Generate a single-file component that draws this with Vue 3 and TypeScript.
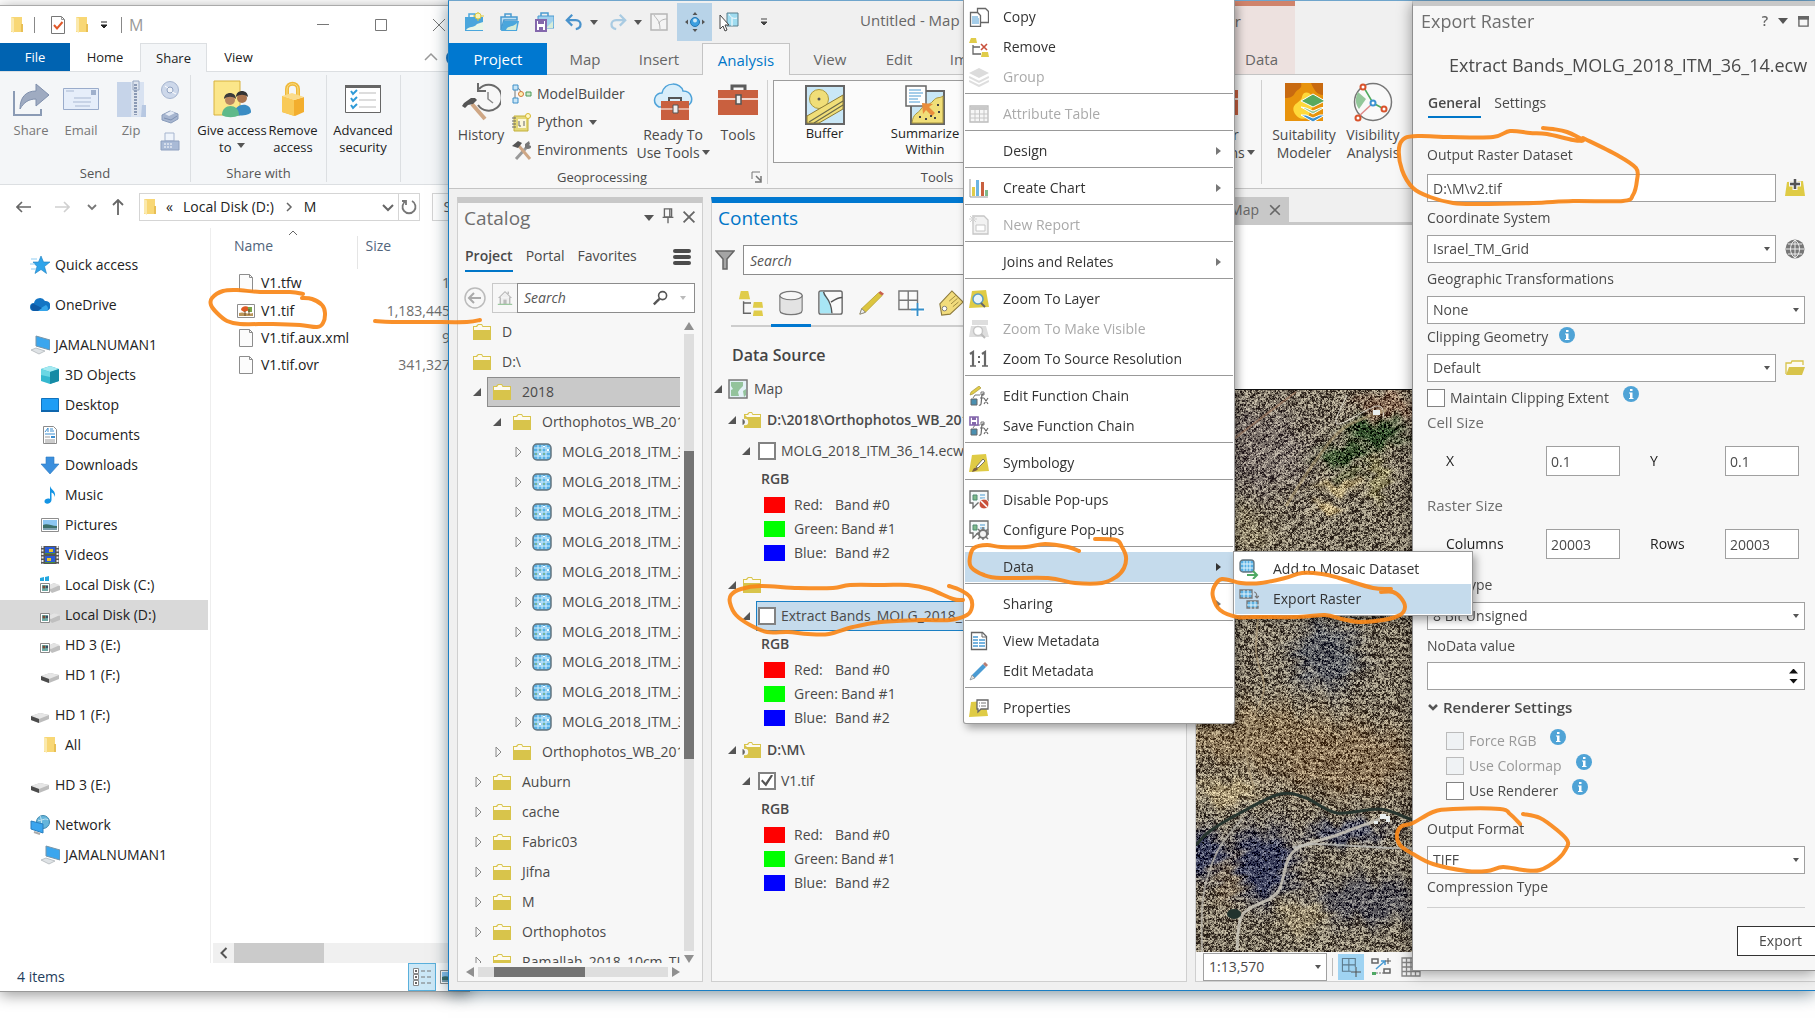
<script setup lang="ts">
import { onMounted, ref } from 'vue'

interface NavItem { icon: string; label: string; level: number; gap?: boolean; selected?: boolean }
interface FileItem { icon: string; name: string; size: string }
interface TreeItem { icon: string; label: string; level: number; state: 'none' | 'open' | 'closed'; selected?: boolean }
interface LayerGroup { folder: string; layer: string; checked: boolean; selected?: boolean; bare?: boolean }
interface MenuEntry { label: string; icon?: string; disabled?: boolean; arrow?: boolean; active?: boolean; sep?: boolean }

const nav: NavItem[] = [
  { icon: 'star', label: 'Quick access', level: 0 },
  { icon: 'cloud', label: 'OneDrive', level: 0, gap: true },
  { icon: 'pc', label: 'JAMALNUMAN1', level: 0, gap: true },
  { icon: 'cube', label: '3D Objects', level: 1 },
  { icon: 'desktop', label: 'Desktop', level: 1 },
  { icon: 'document', label: 'Documents', level: 1 },
  { icon: 'download', label: 'Downloads', level: 1 },
  { icon: 'music', label: 'Music', level: 1 },
  { icon: 'picture', label: 'Pictures', level: 1 },
  { icon: 'video', label: 'Videos', level: 1 },
  { icon: 'diskc', label: 'Local Disk (C:)', level: 1 },
  { icon: 'diskd', label: 'Local Disk (D:)', level: 1, selected: true },
  { icon: 'diskd', label: 'HD 3 (E:)', level: 1 },
  { icon: 'drive', label: 'HD 1 (F:)', level: 1 },
  { icon: 'drive', label: 'HD 1 (F:)', level: 0, gap: true },
  { icon: 'wfolder', label: 'All', level: 1 },
  { icon: 'drive', label: 'HD 3 (E:)', level: 0, gap: true },
  { icon: 'network', label: 'Network', level: 0, gap: true },
  { icon: 'pc', label: 'JAMALNUMAN1', level: 1 },
]

const files: FileItem[] = [
  { icon: 'file', name: 'V1.tfw', size: '1' },
  { icon: 'tif', name: 'V1.tif', size: '1,183,445' },
  { icon: 'file', name: 'V1.tif.aux.xml', size: '9' },
  { icon: 'file', name: 'V1.tif.ovr', size: '341,327' },
]

const tree: TreeItem[] = [
  { icon: 'folder', label: 'D', level: 0, state: 'none' },
  { icon: 'folder', label: 'D:\\', level: 0, state: 'none' },
  { icon: 'folder', label: '2018', level: 1, state: 'open', selected: true },
  { icon: 'folder', label: 'Orthophotos_WB_2018', level: 2, state: 'open' },
  ...Array.from({ length: 10 }, (): TreeItem => ({ icon: 'raster', label: 'MOLG_2018_ITM_36', level: 3, state: 'closed' })),
  { icon: 'folder', label: 'Orthophotos_WB_2018', level: 2, state: 'closed' },
  ...['Auburn', 'cache', 'Fabric03', 'Jifna', 'M', 'Orthophotos', 'Ramallah_2018_10cm_TIF'].map(
    (label): TreeItem => ({ icon: 'folder', label, level: 1, state: 'closed' }),
  ),
]

const groups: LayerGroup[] = [
  { folder: 'D:\\2018\\Orthophotos_WB_2018', layer: 'MOLG_2018_ITM_36_14.ecw', checked: false },
  { folder: '', layer: 'Extract Bands_MOLG_2018_ITM_36_14.ecw', checked: false, selected: true, bare: true },
  { folder: 'D:\\M\\', layer: 'V1.tif', checked: true },
]
const bands = [
  { key: 'red', name: 'Red:', band: 'Band #0' },
  { key: 'green', name: 'Green:', band: 'Band #1' },
  { key: 'blue', name: 'Blue:', band: 'Band #2' },
]

const menu: MenuEntry[] = [
  { label: 'Copy', icon: 'copy' },
  { label: 'Remove', icon: 'remove' },
  { label: 'Group', icon: 'group', disabled: true, sep: true },
  { label: 'Attribute Table', icon: 'table', disabled: true, sep: true },
  { label: 'Design', arrow: true, sep: true },
  { label: 'Create Chart', icon: 'chart', arrow: true, sep: true },
  { label: 'New Report', icon: 'report', disabled: true, sep: true },
  { label: 'Joins and Relates', arrow: true, sep: true },
  { label: 'Zoom To Layer', icon: 'zoomlayer' },
  { label: 'Zoom To Make Visible', icon: 'zoomvis', disabled: true },
  { label: 'Zoom To Source Resolution', icon: 'oneone', sep: true },
  { label: 'Edit Function Chain', icon: 'editfx' },
  { label: 'Save Function Chain', icon: 'savefx', sep: true },
  { label: 'Symbology', icon: 'symbology', sep: true },
  { label: 'Disable Pop-ups', icon: 'popoff' },
  { label: 'Configure Pop-ups', icon: 'popcfg', sep: true },
  { label: 'Data', arrow: true, active: true, sep: true },
  { label: 'Sharing', arrow: true, sep: true },
  { label: 'View Metadata', icon: 'viewmeta' },
  { label: 'Edit Metadata', icon: 'editmeta', sep: true },
  { label: 'Properties', icon: 'props' },
]

const contentTabs = ['bydraw', 'bysource', 'byselect', 'byedit', 'bysnap', 'bylabel']

/* Freehand marker strokes, as x,y points joined by a smooth curve */
const strokes: number[][] = [
  [303,294,290,292,260,292,237,290,223,291,212,298,211,305,217,313,227,321,240,324,273,324,300,325,317,327,323,323,325,313,322,305,312,299,302,298],
  [375,321,392,322,428,322,467,322,480,320],
  [949,586,960,590,970,597,972,607,967,615,950,620,922,620,881,622,853,627,829,634,808,634,788,632,767,632,750,625,736,615,730,603,731,595,741,589,760,586,798,588,833,588,850,585,884,585,908,585,929,589,953,599,963,600],
  [1079,551,1068,547,1045,544,1026,547,1001,547,987,545,974,548,970,557,971,567,984,575,1001,578,1048,578,1075,583,1102,583,1116,577,1124,568,1126,557,1122,547,1116,540,1095,539],
  [1391,589,1373,588,1339,578,1322,574,1302,573,1285,578,1261,583,1241,583,1222,579,1214,587,1213,597,1220,610,1237,617,1254,617,1298,617,1325,615,1342,619,1359,622,1383,620,1400,615,1405,607,1401,598,1393,592,1381,592],
  [1543,128,1553,129,1567,132,1583,140,1573,140,1547,134,1530,133,1510,131,1493,137,1450,137,1420,136,1405,138,1399,148,1402,170,1413,188,1430,197,1453,203,1477,204,1533,203,1573,201,1623,201,1633,195,1637,180,1636,168,1617,155,1583,138],
  [1523,814,1540,818,1557,830,1567,840,1567,847,1558,859,1540,870,1523,870,1503,867,1487,871,1467,871,1433,864,1413,854,1400,845,1397,834,1402,826,1413,823,1433,812,1453,809,1500,809,1510,814,1520,824],
]
function smooth(p: number[]): string {
  const n = p.length / 2
  const at = (i: number): [number, number] => {
    const k = Math.min(n - 1, Math.max(0, i))
    return [p[k * 2], p[k * 2 + 1]]
  }
  let d = `M${p[0]} ${p[1]}`
  for (let i = 0; i < n - 1; i++) {
    const [a, b, c, e] = [at(i - 1), at(i), at(i + 1), at(i + 2)]
    d += `C${b[0] + (c[0] - a[0]) / 6} ${b[1] + (c[1] - a[1]) / 6} ${c[0] - (e[0] - b[0]) / 6} ${c[1] - (e[1] - b[1]) / 6} ${c[0]} ${c[1]}`
  }
  return d
}
const strokePaths = strokes.map(smooth)

/* Aerial photo: speckled terrain with fields, tracks and a stream bed */
const aerial = ref<HTMLCanvasElement | null>(null)
interface Blob { x: number; y: number; rx: number; ry: number; c: [number, number, number]; k: number }
const blobs: Blob[] = [
  { x: 60, y: 60, rx: 60, ry: 50, c: [118, 108, 106], k: 0.7 },
  { x: 180, y: 42, rx: 26, ry: 14, c: [44, 72, 38], k: 1 },
  { x: 148, y: 64, rx: 24, ry: 11, c: [52, 78, 42], k: 0.9 },
  { x: 128, y: 118, rx: 12, ry: 6, c: [178, 158, 116], k: 1 },
  { x: 144, y: 96, rx: 22, ry: 7, c: [166, 148, 106], k: 0.9 },
  { x: 150, y: 84, rx: 18, ry: 6, c: [96, 98, 66], k: 0.8 },
  { x: 182, y: 85, rx: 10, ry: 24, c: [146, 138, 96], k: 0.8 },
  { x: 190, y: 15, rx: 28, ry: 14, c: [138, 104, 82], k: 0.7 },
  { x: 40, y: 140, rx: 40, ry: 26, c: [148, 136, 106], k: 0.6 },
  { x: 60, y: 345, rx: 90, ry: 34, c: [142, 122, 92], k: 0.9 },
  { x: 150, y: 370, rx: 80, ry: 36, c: [136, 114, 86], k: 0.9 },
  { x: 130, y: 265, rx: 34, ry: 36, c: [84, 90, 104], k: 0.7 },
  { x: 30, y: 402, rx: 30, ry: 14, c: [176, 158, 120], k: 0.8 },
  { x: 66, y: 474, rx: 32, ry: 36, c: [60, 64, 92], k: 1 },
  { x: 10, y: 466, rx: 22, ry: 24, c: [60, 64, 92], k: 1 },
  { x: 150, y: 442, rx: 40, ry: 12, c: [72, 76, 100], k: 0.8 },
  { x: 170, y: 510, rx: 60, ry: 24, c: [84, 84, 94], k: 0.8 },
  { x: 104, y: 526, rx: 26, ry: 18, c: [160, 146, 116], k: 0.8 },
  { x: 30, y: 490, rx: 14, ry: 26, c: [142, 122, 94], k: 0.6 },
]
onMounted(() => {
  const cv = aerial.value
  const g = cv?.getContext('2d')
  if (!cv || !g) return
  const w = cv.width
  const h = cv.height
  const img = g.createImageData(w, h)
  let s = 20180036
  const rnd = (): number => {
    s = (Math.imul(s, 1664525) + 1013904223) >>> 0
    return s / 4294967296
  }
  const cw = Math.ceil(w / 2) + 1
  const coarse = Float32Array.from({ length: cw * (Math.ceil(h / 2) + 1) }, rnd)
  for (let y = 0; y < h; y++) {
    for (let x = 0; x < w; x++) {
      let r = 124
      let gr = 115
      let b = 99
      let calm = 0
      const jx = x + Math.sin(y / 5) * 4 + Math.sin(y / 2 + x / 7) * 3
      const jy = y + Math.sin(x / 6) * 4 + Math.sin(x / 3 - y / 9) * 2
      for (const q of blobs) {
        const dx = (jx - q.x) / q.rx
        const dy = (jy - q.y) / q.ry
        const t = q.k * Math.min(1, 1.6 * Math.exp(-(dx * dx + dy * dy) * 1.4))
        r += (q.c[0] - r) * t
        gr += (q.c[1] - gr) * t
        b += (q.c[2] - b) * t
        calm = Math.max(calm, t)
      }
      const ph = y < 180 ? x * 0.45 + y * 0.62 : y * 0.8 - x * 0.2 + Math.sin(x / 28) * 6
      const band = Math.sin(ph + Math.sin((x + y * 2) / 24) * 3)
      const n = coarse[(y >> 1) * cw + (x >> 1)] * 0.55 + rnd() * 0.45 + band * 0.04
      const amp = 1 - calm * 0.35
      let v = band * 8 + (rnd() - 0.5) * 40
      if (n < 0.2 + 0.19 * amp) v -= 74
      else if (n > 0.84 - 0.21 * amp) v += 62
      const i = (y * w + x) * 4
      img.data[i] = r + v
      img.data[i + 1] = gr + v
      img.data[i + 2] = b + v * 0.9
      img.data[i + 3] = 255
    }
  }
  g.putImageData(img, 0, 0)
  const line = (pts: number[], color: string, width: number): void => {
    g.strokeStyle = color
    g.lineWidth = width
    g.lineJoin = 'round'
    g.stroke(new Path2D(smooth(pts)))
  }
  line([0,455,14,441,44,423,84,404,110,408,141,423,184,419,214,429,240,436], '#27352f', 3)
  line([41,560,47,524,81,503,97,462,141,445,184,429], 'rgba(205,200,188,.85)', 3)
  line([97,458,117,454,160,456,214,458,250,450], 'rgba(195,195,190,.8)', 2)
  line([6,562,7,508,21,462,46,429], 'rgba(190,186,176,.75)', 2)
  line([151,5,141,34,181,16,188,28], 'rgba(230,226,214,.9)', 1)
  line([66,190,60,260,68,300,50,350,58,400], 'rgba(176,158,126,.7)', 2)
  line([0,78,60,32,100,2], 'rgba(170,130,104,.6)', 2)
  line([90,116,120,70,148,38,190,20], 'rgba(184,164,120,.5)', 3)
  g.fillStyle = '#e9efef'
  g.fillRect(177, 20, 7, 5)
  g.fillRect(184, 424, 6, 5)
  g.fillRect(190, 426, 4, 6)
  g.fillRect(178, 431, 4, 3)
  g.fillStyle = '#22332d'
  g.beginPath()
  g.ellipse(38, 524, 7, 5, 0, 0, 7)
  g.fill()
})
</script>

<template>
  <div class="desk">
    <svg class="defs" aria-hidden="true">
      <symbol id="i-wfolder" viewBox="0 0 20 20"><path d="M4 2h11v15H4z" fill="#f8d775" /><path d="M4 2l3 1.500v14.500L4 16z" fill="#fbe9ac" /><path d="M14 9h2v8h-2z" fill="#e8bf55" /></symbol>
      <symbol id="i-checkdoc" viewBox="0 0 20 20"><path d="M3.500 1.500h10l3 3v14h-13z" fill="#fff" stroke="#777" /><path d="M13.500 1.500v3h3" fill="none" stroke="#999" /><path d="M6 10l3 3.500L14.500 7" fill="none" stroke="#e0582a" stroke-width="2" /></symbol>
      <symbol id="i-share" viewBox="0 0 38 38"><path d="M2 11v24h27v-6" fill="none" stroke="#8b9bb5" stroke-width="2" /><path d="M8 29c0-12 6-18 16-18V4l13 11-13 11v-7c-7 0-12 3-16 10z" fill="#9fabc1" stroke="#8090ad" /></symbol>
      <symbol id="i-email" viewBox="0 0 38 38"><path d="M1.500 8.500h35v21h-35z" fill="#e6eefa" stroke="#9aaccb" /><path d="M29 10h5v5h-5z" fill="#9fb0cc" /><path d="M4 11h8M12 18h17M11 22h18M13 26h15" stroke="#a9b8d2" /></symbol>
      <symbol id="i-zip" viewBox="0 0 38 38"><path d="M5 2h27v35H5z" fill="#d8e2f1" /><path d="M5 2h14v35H5z" fill="#c6d4e9" /><path d="M20 1h7v35h-7z" fill="#dfe5ee" /><path d="M23.500 4v31" stroke="#8b9ab5" stroke-width="3" stroke-dasharray="2 1" /><path d="M21 1h6v9h-6z" fill="none" stroke="#98a8c2" /><path d="M30 25h4v12h-5z" fill="#b7c8e2" /></symbol>
      <symbol id="i-disc" viewBox="0 0 20 20"><circle cx="10" cy="10" r="8.500" fill="#cdd8ea" stroke="#a6b5cf" /><circle cx="10" cy="10" r="3" fill="#eef2f8" stroke="#8fa1c0" /><path d="M5 6l3 2M12 12l4 2" stroke="#fff" /></symbol>
      <symbol id="i-printer" viewBox="0 0 20 20"><path d="M2 9l8-4 8 3v5l-7 4-9-3z" fill="#a7b6d0" stroke="#8a9cbb" /><path d="M5 8l6-3 4 2-6 3z" fill="#e6ecf6" /><path d="M4 12l7 2M11 14l6-4" stroke="#7d90b2" /></symbol>
      <symbol id="i-fax" viewBox="0 0 20 20"><path d="M5 1h9v8H5z" fill="#eff4fb" stroke="#a6b5cf" /><path d="M1 9h18v9H1z" fill="#a9bad6" stroke="#8ea0bf" /><path d="M4 12h9M4 15h9" stroke="#fff" stroke-dasharray="2 1" /></symbol>
      <symbol id="i-people" viewBox="0 0 38 38"><path d="M1 1h26v34H1z" fill="#fbe68a" stroke="#d8b23e" /><circle cx="17" cy="20" r="5" fill="#b98660" /><path d="M11 19c0-8 12-8 12 0-3-3-9-3-12 0z" fill="#3b3b3b" /><circle cx="29" cy="18" r="5" fill="#a9744f" /><path d="M23 17c0-8 12-8 12 0-3-3-9-3-12 0z" fill="#333" /><path d="M21 34c0-11 17-13 17-2 0 3-14 5-17 2z" fill="#3a8cc4" /><path d="M9 35c0-12 17-12 17 0-4 3-13 3-17 0z" fill="#5fb98a" /></symbol>
      <symbol id="i-lock" viewBox="0 0 38 38"><path d="M13 17V9c0-7 11-7 11 0v8" fill="none" stroke="#efb93c" stroke-width="4" /><path d="M13 17V9c0-7 11-7 11 0v8" fill="none" stroke="#fbe08a" stroke-width="1" /><path d="M8 16l12 4 10-3v15l-9 4-13-4z" fill="#f3ae2e" /><path d="M8 16l12 4v16L8 32z" fill="#f9ca58" /><path d="M8 16l10-3 12 4-10 3z" fill="#fbdc8b" /></symbol>
      <symbol id="i-advsec" viewBox="0 0 38 38"><path d="M1.500 5.500h35v27h-35z" fill="#fff" stroke="#666" /><path d="M1 5h36v3H1z" fill="#666" /><path d="M15 13h17M15 20h17M15 27h17" stroke="#bbb" /><path d="M7 11l2 3 4-4M7 18l2 3 4-4M7 25l2 3 4-4" fill="none" stroke="#2f9bd8" stroke-width="2" /></symbol>
      <symbol id="i-star" viewBox="0 0 20 20"><path d="M11 1l2.500 6H20l-5.500 4.500 2 7L11 14.500 5 18.500l2-7L3 7h5.500z" fill="#2fa4ea" stroke="#1b7dc0" stroke-width=".6" /><path d="M1 4h6M0 9h5M1 14h5" stroke="#8fcdf3" /></symbol>
      <symbol id="i-cloud" viewBox="0 0 20 20"><path d="M4 16a4 4 0 0 1 0-8 6 6 0 0 1 11-2 5 5 0 0 1 1 10z" fill="#1475c4" /><path d="M6 16l10-6a4 4 0 0 1 1 6z" fill="#35a5ea" /><path d="M4 16a4 4 0 0 1-1-7.500L12 13l-4 3z" fill="#0e5aa6" /></symbol>
      <symbol id="i-pc" viewBox="0 0 20 20"><path d="M6 1l14 4v10L6 11z" fill="#3ba6ee" stroke="#7895a8" /><path d="M1 15l5-2 9 3-6 3z" fill="#dfe3e6" stroke="#aab0b5" stroke-width=".7" /></symbol>
      <symbol id="i-cube" viewBox="0 0 20 20"><path d="M10 1l9 3v12l-9 3-9-3V4z" fill="#35b8cf" /><path d="M10 1l9 3-9 3-9-3z" fill="#a5eaf1" /><path d="M10 7l9-3v12l-9 3z" fill="#168aa5" /><path d="M1 4l9 3v5L1 10z" fill="#6bd7e4" /></symbol>
      <symbol id="i-desktop" viewBox="0 0 20 20"><path d="M1.500 3.500h17v13h-17z" fill="#1e9df5" stroke="#1172bd" /><path d="M1 15h18v2H1z" fill="#0f66ad" /></symbol>
      <symbol id="i-document" viewBox="0 0 20 20"><path d="M3.500 1.500h10l3 3v14h-13z" fill="#fff" stroke="#8b8b8b" /><path d="M5 7l3-4v4M10 4h3M10 6h4M5 9h10" fill="none" stroke="#3d8ed0" /><path d="M5 12h5M5 15h10M5 17h10" stroke="#999" /><path d="M11 11h4v2h-4z" fill="#3d8ed0" /></symbol>
      <symbol id="i-download" viewBox="0 0 20 20"><path d="M6 2h8v7h5l-9 10L1 9h5z" fill="#3b8fdd" stroke="#2b78c0" stroke-width=".6" /></symbol>
      <symbol id="i-music" viewBox="0 0 20 20"><path d="M10 1c1 4 6 4 5 11-1-3-2-4-3.500-4.500V15c0 4-7 5-7 1.500 0-3 4-3.500 5.500-2.500z" fill="#1494e4" /></symbol>
      <symbol id="i-picture" viewBox="0 0 20 20"><path d="M1.500 3.500h17v13h-17z" fill="#fff" stroke="#8d8d8d" /><path d="M3 5h14v10H3z" fill="#8cc6f2" /><path d="M3 10c4-2 8 1 14 1v4H3z" fill="#3c6f6a" /><path d="M3 13h14v2H3z" fill="#7da0b0" /></symbol>
      <symbol id="i-video" viewBox="0 0 20 20"><path d="M1 1h18v18H1z" fill="#555" /><path d="M2.500 1v18M17.500 1v18" stroke="#eee" stroke-width="2" stroke-dasharray="2 1.500" /><path d="M5 2h10v7H5zM5 11h10v7H5z" fill="#2b5bd7" /><path d="M9 4h4v3H9zM7 13h4v3H7z" fill="#e7c42c" /><path d="M5 8h10v1H5zM5 17h10v1H5z" fill="#4d8d3a" /></symbol>
      <symbol id="i-drive" viewBox="0 0 20 20"><path d="M1 11l9-3 9 2v4l-10 4-8-3z" fill="#bcbcbc" /><path d="M1 11l9-3 9 2-10 4z" fill="#e6e6e6" /><path d="M1 11l8 3v4l-8-3z" fill="#4b4b4b" /></symbol>
      <symbol id="i-diskd" viewBox="0 0 20 20"><path d="M6 12l8-4 6 3v4l-8 3z" fill="#bfbfbf" /><path d="M6 12l8-4 6 2-9 4z" fill="#e3e3e3" /><path d="M.500 8.500h9v9h-9z" fill="#fff" stroke="#8a8a8a" /><path d="M2 10h6v6H2z" fill="#6fa8a3" /><circle cx="4" cy="12" r="1.500" fill="#7a4b35" /><circle cx="7" cy="12" r="1.200" fill="#384a66" /></symbol>
      <symbol id="i-diskc" viewBox="0 0 20 20"><use href="#i-diskd" /><path d="M0 3l4-1v4H0zM5 2l4-1v5H5z" fill="#24a8e0" /></symbol>
      <symbol id="i-network" viewBox="0 0 20 20"><circle cx="13" cy="7" r="6.500" fill="#66b6dc" stroke="#3e87ac" /><path d="M8 5c3 2 7-3 10 0M10 1c2 4 2 8 0 12" fill="none" stroke="#c6e6f3" /><path d="M1 6l12 3v9L1 14z" fill="#3aa5ee" stroke="#2a7fbe" /><path d="M4 17l6 2" stroke="#aaa" stroke-width="2" /></symbol>
      <symbol id="i-file" viewBox="0 0 20 20"><path d="M3.500 1.500h10l3 3v14h-13z" fill="#fcfcfc" stroke="#8d8d8d" /><path d="M13.500 1.500v3h3" fill="none" stroke="#8d8d8d" /></symbol>
      <symbol id="i-tif" viewBox="0 0 20 20"><path d="M1.500 3.500h17v13h-17z" fill="#fff" stroke="#8d8d8d" /><path d="M5 9c0-5 9-5 9 0l-3 1-3 1z" fill="#dd5a24" /><path d="M12 6h4v5h-4z" fill="#7ba548" /><path d="M3 12c5-2 8 2 14 0v3H3z" fill="#b99459" /><path d="M9 10v5M13 8v6" stroke="#6b4a2b" /></symbol>

      <symbol id="i-folder" viewBox="0 0 20 20"><path d="M1 4h3l2-2h4l1 2h8v14H1z" fill="#d8c44b" /><path d="M2 5h3l1.500-2h3l1 2H18v3H2z" fill="#fdfaf0" /></symbol>
      <symbol id="i-gfolder" viewBox="0 0 20 20"><path d="M2 4h3l2-2h3l1 2h8v14H2z" fill="#d8c44b" /><path d="M3 5h3l1.500-2h2l1 2H18v2H5z" fill="#fdfaf0" /><circle cx="3" cy="12" r="3.200" fill="#f7f7f7" /><path d="M1 9.500a3 3 0 0 1 0 5z" fill="#666" stroke="#666" /></symbol>
      <symbol id="i-raster" viewBox="0 0 20 20"><rect x="1" y="2" width="18" height="16" rx="4" fill="#55b0e6" stroke="#66757f" stroke-width="1.500" /><path d="M2 6h16M2 10h16M2 14h16M6 3v14M10 3v14M14 3v14" stroke="#d5effc" /><path d="M7 7h2v2H7zM11 11h2v2h-2zM3 11h2v2H3z" fill="#74b39a" /><path d="M11 4h2v1h-2zM15 7h2v2h-2zM7 11h2v2H7z" fill="#fff" /></symbol>
      <symbol id="i-map" viewBox="0 0 20 20"><path d="M1 1h18v18H1z" fill="#e3f1f7" stroke="#777" stroke-width="1.500" /><path d="M3 3h12v4l-3 3-2 3 1 4H3v-6l2-1-2-3z" fill="#93c39c" /><path d="M15 12l3-2v6l-2 2z" fill="#93c39c" /></symbol>

      <symbol id="i-newproj" viewBox="0 0 20 20"><path d="M1 5h18v14H1z" fill="#4aa6dc" /><path d="M5 5V2h6v3" fill="none" stroke="#4aa6dc" stroke-width="1.500" /><path d="M2 18c4-5 7-1 11-6l6-2v8z" fill="#e9f6e8" /><circle cx="14" cy="4" r="3" fill="#f9f3b6" stroke="#dcc840" /><path d="M14 -1v2M14 7v2M9 4h2M17 4h3" stroke="#dcc840" /></symbol>
      <symbol id="i-openproj" viewBox="0 0 20 20"><path d="M2 18V5h16v3H5z" fill="#bfe0f4" stroke="#4a9ad0" stroke-width="1.500" /><path d="M6 5V2h6v3" fill="none" stroke="#4a9ad0" stroke-width="1.500" /><path d="M5 9h15l-2 10H2z" fill="#4aa6dc" /><path d="M7 18c2-5 6-2 11-7l-1 7z" fill="#d6ecd8" /></symbol>
      <symbol id="i-save" viewBox="0 0 20 20"><path d="M4 4h16v12H4z" fill="#9fd0ee" stroke="#4a9ad0" /><path d="M7 4V1h7v3" fill="none" stroke="#4a9ad0" stroke-width="1.500" /><path d="M13 15l6-6v7h-6z" fill="#d6ecd8" /><path d="M2 8h10v11H2z" fill="#fff" stroke="#8467ac" stroke-width="2" /><path d="M4 8h6v4H4zM5 15h4v4H5z" fill="#8467ac" /></symbol>
      <symbol id="i-undo" viewBox="0 0 20 20"><path d="M8 2L2 8l6 6M2 8h10c7 0 7 9 0 10" fill="none" stroke="#4a93cc" stroke-width="2.500" /></symbol>
      <symbol id="i-redo" viewBox="0 0 20 20"><path d="M12 2l6 6-6 6M18 8H8c-7 0-7 9 0 10" fill="none" stroke="#a9cbe2" stroke-width="2.500" /></symbol>
      <symbol id="i-gmap" viewBox="0 0 20 20"><path d="M2 2h16v16H2z" fill="#f4f4f4" stroke="#b5b5b5" stroke-width="1.500" /><path d="M5 3c2 4 6 5 6 14M18 7c-4 0-8 2-8 5" fill="none" stroke="#b5b5b5" /></symbol>
      <symbol id="i-nav" viewBox="0 0 20 20"><circle cx="10" cy="10" r="4.500" fill="#3d9fe0" stroke="#2577b5" /><circle cx="10" cy="8.500" r="2" fill="#cfe8f7" /><path d="M10 0l2.500 3h-5zM10 20l2.500-3h-5zM0 10l3-2.500v5zM20 10l-3-2.500v5z" fill="#555" /></symbol>
      <symbol id="i-select" viewBox="0 0 20 20"><path d="M8 1h11v13H8z" fill="#9fdcf0" stroke="#5a7f8c" /><path d="M10 2c2 4 5 5 8 4M13 6v8" fill="none" stroke="#fff" /><path d="M1 3v14l3-3 2 5 2-1-2-5h4z" fill="#fff" stroke="#444" /></symbol>
      <symbol id="i-history" viewBox="0 0 40 40"><path d="M18 7a13 13 0 1 1-1 16" fill="none" stroke="#6a6a6a" stroke-width="2" /><path d="M17 1v8h8" fill="none" stroke="#6a6a6a" stroke-width="2" /><path d="M27 10v7l5 4" fill="none" stroke="#888" stroke-width="1.500" /><path d="M11 22l13 15" stroke="#cfa785" stroke-width="4" /><path d="M1 24l2-3 7-5h4l2 2-4 4-5 1-3 3z" fill="#555" /></symbol>
      <symbol id="i-model" viewBox="0 0 20 20"><path d="M3 6v8M5 4c4 0 3 6 6 6M14 10h2" fill="none" stroke="#777" /><path d="M1 1h5v5H1zM1 14h5v5H1z" fill="#c9e6f7" stroke="#3f8fc8" /><circle cx="9" cy="10" r="2.500" fill="#fff0b3" stroke="#d1773a" /><path d="M14 8h5v4h-5z" fill="#cfe7c9" stroke="#4a9958" /></symbol>
      <symbol id="i-python" viewBox="0 0 20 20"><path d="M2 4h14v15H2z" fill="#e4d879" stroke="#c3b03a" /><path d="M6 7h8v9H6z" fill="#fbf7da" /><path d="M0 6h4M0 9h4M0 12h4M0 15h4" stroke="#666" /><path d="M7 9v5h2M12 9v5" fill="none" stroke="#666" /><circle cx="16" cy="4" r="2.500" fill="#fff9c9" stroke="#d8b82f" /></symbol>
      <symbol id="i-env" viewBox="0 0 20 20"><path d="M4 19L14 8" stroke="#999" stroke-width="3" /><path d="M13 4l4-3 1 3-1 1 2 1c1 3-4 4-6 2z" fill="#777" /><path d="M7 6l11 13" stroke="#cfa785" stroke-width="3" /><path d="M0 6l6-5 4 2-4 5z" fill="#555" /></symbol>
      <symbol id="i-cloudtools" viewBox="0 0 40 40"><path d="M6 25C-2 20 2 11 9 11 12 -1 28 0 30 9c9 0 12 11 4 15z" fill="#d9eefa" stroke="#4fa3d9" stroke-width="1.500" /><path d="M8 19h28v19H8z" fill="#c9603f" /><path d="M16 19v-3h12v3" fill="none" stroke="#555" stroke-width="2" /><path d="M8 27h28" stroke="#fff" /><path d="M20 23h5v8h-5z" fill="#eee" stroke="#555" /></symbol>
      <symbol id="i-tools" viewBox="0 0 40 40"><path d="M0 8h40v25H0z" fill="#c9603f" /><path d="M14 8V4h13v4" fill="none" stroke="#5b5b5b" stroke-width="3" /><path d="M0 17h40" stroke="#fff" stroke-width="1.500" /><path d="M18 13h5v9h-5z" fill="#eee" stroke="#555" stroke-width="1.500" /></symbol>
      <symbol id="i-launch" viewBox="0 0 12 12"><path d="M1 8V1h8" fill="none" stroke="#777" /><path d="M5 5l5 5M10 5v6H4" fill="none" stroke="#777" stroke-width="1.500" /></symbol>
      <symbol id="i-buffer" viewBox="0 0 40 40"><path d="M1 1h38v38H1z" fill="#c9e7f6" stroke="#666" stroke-width="2" /><circle cx="14" cy="14" r="9.500" fill="#f0de78" stroke="#ad9a3c" /><circle cx="14" cy="14" r="1.500" fill="#555" /><path d="M2 38v-7L38 10v14L14 38z" fill="#f0de78" stroke="#8c7b36" /><path d="M4 37L38 16M9 38l29-18" stroke="#6a6a4a" stroke-width="1.200" /></symbol>
      <symbol id="i-summ" viewBox="0 0 40 40"><path d="M6 6h33v33H6z" fill="#c9e7f6" stroke="#666" stroke-width="2" /><path d="M7 38c1-10 6-9 9-14s8-3 12-8 6-2 10-5v27z" fill="#f0de78" stroke="#a8953e" /><path d="M1 1h20v20H1z" fill="#fff" stroke="#666" stroke-width="1.500" /><path d="M4 5h12M4 8h14M4 11h12M4 14h9M4 17h11" stroke="#4a9bd3" /><path d="M17 18l11 1-4 3 6 6-3 3-6-6-3 4z" fill="#e98d3c" /><path d="M14 31h2v2h-2zM20 33h2v2h-2zM29 32h2v2h-2zM33 26h2v2h-2zM32 19h2v2h-2zM25 30h2v2h-2z" fill="#444" /></symbol>
      <symbol id="i-suit" viewBox="0 0 40 40"><path d="M1 1h38v38H1z" fill="#e8930c" /><path d="M1 1h16c2 6-4 6-6 10S6 16 1 16zM27 1h12v12c-6 0-9-5-12-12z" fill="#c86a10" /><path d="M10 30c-3-9 7-9 8-15s8-6 11 1-3 12-4 17-11 6-15-3z" fill="#ffd93a" /><path d="M29 12l12 7-12 6-12-6z" fill="#56a95e" stroke="#fff" /><path d="M17 25l5 1 7 3 7-3 5-1-12 7z" fill="#93c79a" stroke="#fff" /><path d="M17 33h5l7 3 7-3h5l-12 7z" fill="#3b92d2" stroke="#fff" /></symbol>
      <symbol id="i-vis" viewBox="0 0 40 40"><circle cx="20" cy="20" r="18.500" fill="#f9f9f9" stroke="#777" stroke-width="1.500" /><path d="M5 10l8 7-7 10c-4-5-4-11-1-17z" fill="#93c79a" /><path d="M20 21L10 4M20 21l11 6" stroke="#4fa95e" stroke-width="1.500" /><path d="M20 21L5 35" stroke="#d88" stroke-width="1.500" /><circle cx="10" cy="5" r="2.500" fill="#fff" stroke="#d9532c" stroke-width="2" /><circle cx="5" cy="36" r="2.500" fill="#fff" stroke="#d9532c" stroke-width="2" /><circle cx="31" cy="27" r="2.500" fill="#fff" stroke="#d9532c" stroke-width="2" /><circle cx="20" cy="21" r="2.500" fill="#fff" stroke="#3b92d2" stroke-width="2" /></symbol>

      <symbol id="i-filter" viewBox="0 0 20 20"><path d="M1 1h18l-7 8v10H8V9z" fill="#a5a5a5" stroke="#666" stroke-width="1.500" /></symbol>
      <symbol id="i-bydraw" viewBox="0 0 28 28"><path d="M6 12v13h8M6 14h8" fill="none" stroke="#666" stroke-width="1.500" /><path d="M3 1h8l2 9H1zM17 13h9l1 6H16zM17 22h9l1 6H16z" fill="#e0cc4a" /></symbol>
      <symbol id="i-bysource" viewBox="0 0 28 28"><path d="M2 6v16c0 6 24 6 24 0V6z" fill="#e3e3e3" stroke="#777" stroke-width="1.200" /><ellipse cx="14" cy="6" rx="12" ry="4.500" fill="#f7f7f7" stroke="#777" stroke-width="1.200" /></symbol>
      <symbol id="i-byselect" viewBox="0 0 28 28"><rect x="1" y="1" width="25" height="25" rx="2" fill="#fafafa" stroke="#666" stroke-width="1.500" /><path d="M2 2h4l6 9 3 14H2z" fill="#a8e6f5" /><path d="M6 2c1 7 8 6 9 23M26 8c-5 0-9 3-12 5" fill="none" stroke="#555" stroke-width="1.500" /></symbol>
      <symbol id="i-byedit" viewBox="0 0 28 28"><path d="M2 26l2-6L22 3l4 3L8 24z" fill="#dcc53f" stroke="#b29d2b" stroke-width=".8" /><path d="M22 3l2-2 4 3-2 2z" fill="#c9604e" /><path d="M2 26l2-6 4 4z" fill="#eee" stroke="#777" stroke-width=".8" /></symbol>
      <symbol id="i-bysnap" viewBox="0 0 28 28"><path d="M1 1h20v20H1zM11 1v20M1 11h20" fill="#fafafa" stroke="#777" stroke-width="1.500" /><path d="M21 14v14M14 21h14" stroke="#fff" stroke-width="5" /><path d="M21 14v14M14 21h14" stroke="#378fc9" stroke-width="2" /></symbol>
      <symbol id="i-snapmap" viewBox="0 0 28 28"><path d="M2 2h18v18H2zM11 2v18M2 11h18" fill="none" stroke="#5c7a8c" stroke-width="1.500" /><path d="M21 14v14M14 21h14" stroke="#9fd3f2" stroke-width="5" /><path d="M21 14v14M14 21h14" stroke="#555" stroke-width="1.500" /></symbol>
      <symbol id="i-bylabel" viewBox="0 0 28 28"><path d="M2 15L15 1l12 12-14 13-9 1z" fill="#f2dc7c" stroke="#8c7a3c" stroke-width="1.200" /><circle cx="7" cy="20" r="2.500" fill="#fff" stroke="#777" /><path d="M12 12l7-6M14 15l7-6M16 18l6-5" stroke="#99873f" /></symbol>
      <symbol id="i-home" viewBox="0 0 20 20"><path d="M2 10l8-8 8 8M4 9v9h12V9M14 5V2" fill="#efefef" stroke="#a0a0a0" stroke-width="1.200" /><path d="M8 12h4v6H8z" fill="#bbb" /><path d="M1 18h18" stroke="#9cc89f" stroke-width="1.500" /></symbol>
      <symbol id="i-mag" viewBox="0 0 20 20"><circle cx="12" cy="7" r="5" fill="none" stroke="#555" stroke-width="2" /><path d="M8 11l-7 7" stroke="#555" stroke-width="3" /></symbol>
      <symbol id="i-pin" viewBox="0 0 20 20"><path d="M6 2h8v9H6zM12 2v9M4 11.500h12M10 12v6" fill="none" stroke="#666" stroke-width="1.500" /></symbol>
      <symbol id="i-x" viewBox="0 0 20 20"><path d="M4 4l12 12M16 4L4 16" stroke="#666" stroke-width="2" /></symbol>

      <symbol id="i-copy" viewBox="0 0 20 20"><path d="M8.500 1.500h8l3 3v11h-11z" fill="#fff" stroke="#666" stroke-width="1.300" /><path d="M1.500 5.500h7l3 3v11h-10z" fill="#fff" stroke="#666" stroke-width="1.300" /><path d="M3 10h6M3 12h7M3 14h7M3 16h7" stroke="#4a9bd3" /></symbol>
      <symbol id="i-remove" viewBox="0 0 20 20"><path d="M4 8v9h8M4 10h7" fill="none" stroke="#666" stroke-width="1.300" /><path d="M2 1h5l1 5H0zM13 15h6l1 5h-8z" fill="#e0cc4a" /><path d="M12 7l6 6M18 7l-6 6" stroke="#c8503c" stroke-width="1.600" /></symbol>
      <symbol id="i-group" viewBox="0 0 20 20"><path d="M10 1l10 5-10 5L0 6z" fill="#dcdcdc" /><path d="M0 10l10 5 10-5M0 14l10 5 10-5" fill="none" stroke="#dedede" stroke-width="2" /></symbol>
      <symbol id="i-table" viewBox="0 0 20 20"><path d="M1 2h18v16H1z" fill="#f6f6f6" stroke="#bcbcbc" stroke-width="1.300" /><path d="M1 3h18v3H1z" fill="#c9c9c9" /><path d="M1 10h18M1 14h18M6 4v14M10.500 4v14M15 4v14" stroke="#c6c6c6" /></symbol>
      <symbol id="i-chart" viewBox="0 0 20 20"><path d="M1 1v18h18" fill="none" stroke="#999" /><path d="M3 9h3v9H3z" fill="#e0cc4a" /><path d="M7 2h3v16H7z" fill="#6bb4e2" /><path d="M12 4h3v14h-3z" fill="#c9603f" /><path d="M16 12h3v6h-3z" fill="#7fb98a" /></symbol>
      <symbol id="i-report" viewBox="0 0 20 20"><path d="M4 5V1h11l4 4v14H4z" fill="#f2f2f2" stroke="#c6c6c6" stroke-width="1.300" /><path d="M7 10h9v6H7z" fill="#fff" stroke="#c6c6c6" /><path d="M4 0v9M0 4h8M1 1l6 6M7 1L1 7" stroke="#d2d2d2" /></symbol>
      <symbol id="i-zoomlayer" viewBox="0 0 20 20"><path d="M3 2l14-1 3 17-20 1z" fill="#dfcb45" /><circle cx="9" cy="10" r="5" fill="#e9f5fb" stroke="#5b9cc6" stroke-width="1.500" /><path d="M12 14l4 4" stroke="#666" stroke-width="2" /></symbol>
      <symbol id="i-zoomvis" viewBox="0 0 20 20"><path d="M3 1h16v5H3zM2 7h15l3 11H0z" fill="#dedede" /><circle cx="9" cy="12" r="4.500" fill="#fff" stroke="#c6c6c6" stroke-width="1.500" /><path d="M12 15l4 4" stroke="#bbb" stroke-width="2" /></symbol>
      <symbol id="i-oneone" viewBox="0 0 20 20"><path d="M1 5l3-2v14M13 5l3-2v14" fill="none" stroke="#666" stroke-width="2.200" /><path d="M1 17h6M13 17h6" stroke="#666" stroke-width="1.500" /><path d="M9 7h2v2H9zM9 12h2v2H9z" fill="#666" /></symbol>
      <symbol id="i-fx" viewBox="0 0 20 20"><path d="M2 13h6v6H2z" fill="#4a8fb0" stroke="#666" /><path d="M4 12l2-3h5M12 6h3v3h-3z" fill="none" stroke="#777" /><path d="M15 8c-3-1-2 4-3 10-1 2-2 1-2 1M11 12h4M15 12l4 6M19 12l-4 6" fill="none" stroke="#6a6a6a" stroke-width="1.200" /></symbol>
      <symbol id="i-editfx" viewBox="0 0 20 20"><use href="#i-fx" /><path d="M1 9l1-3 8-6 2 2-8 6z" fill="#e0cc4a" stroke="#a08c2b" stroke-width=".6" /></symbol>
      <symbol id="i-savefx" viewBox="0 0 20 20"><use href="#i-fx" /><path d="M1 1h8v8H1z" fill="#fff" stroke="#8467ac" stroke-width="1.600" /><path d="M3 1h4v3H3zM3 6h4v3H3z" fill="#8467ac" /></symbol>
      <symbol id="i-symbology" viewBox="0 0 20 20"><path d="M3 2l14-1 3 17-20 1z" fill="#dfcb45" /><path d="M7 14l7-8 2 2-7 7z" fill="#fff" stroke="#555" stroke-width=".8" /><path d="M3 19c1-4 3-5 5-4s0 3-5 4z" fill="#7b5f3d" /></symbol>
      <symbol id="i-pop" viewBox="0 0 20 20"><path d="M1 1h18v12H9l-5 5v-5H1z" fill="#f4f8f9" stroke="#6b6b6b" stroke-width="1.300" /><path d="M4 5h4v5H4z" fill="#7fb98a" stroke="#4f8a72" /><path d="M11 5h5M11 8h5" stroke="#4a9bd3" /></symbol>
      <symbol id="i-popoff" viewBox="0 0 20 20"><use href="#i-pop" /><circle cx="15" cy="14" r="5" fill="#c9503a" stroke="#fff" /><path d="M12 11l6 6" stroke="#fff" stroke-width="1.600" /></symbol>
      <symbol id="i-popcfg" viewBox="0 0 20 20"><use href="#i-pop" /><circle cx="14" cy="14" r="4" fill="#f4f4f4" stroke="#777" stroke-width="2" /><path d="M14 7v3M14 18v2M7 14h3M18 14h2M9 9l2 2M19 9l-2 2M9 19l2-2M19 19l-2-2" stroke="#777" stroke-width="1.500" /></symbol>
      <symbol id="i-viewmeta" viewBox="0 0 20 20"><path d="M2.500 1.500h11l4 4v13h-15z" fill="#fff" stroke="#666" stroke-width="1.300" /><path d="M13 2v4h4" fill="none" stroke="#666" /><path d="M4 6h5M4 9h5M4 12h5M4 15h5M10 9h6M10 12h6M10 15h6" stroke="#4a9bd3" stroke-width="1.300" /></symbol>
      <symbol id="i-editmeta" viewBox="0 0 20 20"><path d="M1 19l2-5L14 3l3 3L6 17z" fill="#4a9bd3" /><path d="M14 3l2-2 3 3-2 2z" fill="#b87e72" /><path d="M1 19l2-5 3 3z" fill="#ddd" stroke="#777" stroke-width=".5" /></symbol>
      <symbol id="i-props" viewBox="0 0 20 20"><path d="M2 4l14-1 3 15-19 1z" fill="#dfcb45" /><path d="M8 2h11v9h-7l-3 3v-3H8z" fill="#fff" stroke="#666" stroke-width="1.300" /><path d="M10 5h1M12 5h5M10 8h1M12 8h5" stroke="#777" /></symbol>
      <symbol id="i-mosaic" viewBox="0 0 20 20"><rect x="1" y="1" width="14" height="12" rx="3" fill="#55b0e6" stroke="#66757f" stroke-width="1.300" /><path d="M2 5h12M2 9h12M5 2v10M8 2v10M11 2v10" stroke="#e3f4fc" /><path d="M8 16h9M14 12l4 4-4 4" fill="none" stroke="#4fa964" stroke-width="2" /></symbol>
      <symbol id="i-exportr" viewBox="0 0 20 20"><path d="M1 1h12v8H1zM8 12h11v7H8z" fill="#5fb2e3" stroke="#777" stroke-width="1.300" /><path d="M1 5h12M5 1v8M9 1v8M8 16h12M12 12v8M16 12v8" stroke="#e3f4fc" /><path d="M15 3c3 0 3 3 3 6M16 7l2 2 2-2" fill="none" stroke="#777" stroke-width="1.200" /></symbol>

      <symbol id="i-addras" viewBox="0 0 20 20"><path d="M2 4l16-1 2 15H0z" fill="#dfcb45" /><path d="M10 0v12M4 6h12" stroke="#f7f7f7" stroke-width="5" /><path d="M10 1v10M5 6h10" stroke="#555" stroke-width="2.500" /></symbol>
      <symbol id="i-globe" viewBox="0 0 20 20"><circle cx="10" cy="10" r="9.500" fill="#777" /><path d="M1 10h18M3 5h14M3 15h14M10 1v18M10 1C4 5 4 15 10 19M10 1c6 4 6 14 0 18" fill="none" stroke="#eee" /></symbol>
      <symbol id="i-openf" viewBox="0 0 20 20"><path d="M1 16V5h5l1-2h11v4" fill="#fdfaf0" stroke="#d8c44b" stroke-width="1.300" /><path d="M4 9h16l-3 8H1z" fill="#d8c44b" /></symbol>
      <symbol id="i-info" viewBox="0 0 16 16"><circle cx="8" cy="8" r="8" fill="#4fa3d6" /><path d="M7 3h2.500v2H7zM6 6.500h3.500V12h1v1H6v-1h1V7.500H6z" fill="#fff" /></symbol>
      <symbol id="i-snap2" viewBox="0 0 20 20"><path d="M1 2h6v4H1zM13 12h6v4h-6z" fill="none" stroke="#666" stroke-width="1.500" /><path d="M5 12l9-8M14 8V4h-4" fill="none" stroke="#4a9bd3" stroke-width="1.500" /><path d="M17 1v6M14 4h6" stroke="#555" /><path d="M1 15h4v3H1z" fill="#4fa964" /><path d="M5 16h8" stroke="#777" stroke-dasharray="2 1" /></symbol>
      <symbol id="i-grid" viewBox="0 0 20 20"><path d="M1 1h18v18H1zM1 5.500h18M1 10h18M1 14.500h18M5.500 1v18M10 1v18M14.500 1v18" fill="none" stroke="#888" stroke-width="1.300" /></symbol>
      <symbol id="i-listview" viewBox="0 0 20 20"><path d="M1.500 1.500h5v5h-5zM1.500 7.500h5v5h-5zM1.500 13.500h5v5h-5z" fill="#fff" stroke="#888" /><path d="M3 3h2v2H3zM3 9h2v2H3zM3 15h2v2H3z" fill="#666" /><path d="M9 4h4M15 4h4M9 10h4M15 10h4M9 16h4M15 16h4" stroke="#777" /></symbol>
    </svg>

    <!-- File Explorer -->
    <section class="explorer">
      <header class="ex-title">
        <svg class="i20"><use href="#i-wfolder" /></svg>
        <span class="bar b1"></span>
        <svg class="i20"><use href="#i-checkdoc" /></svg>
        <svg class="i20 f2"><use href="#i-wfolder" /></svg>
        <svg class="qat" viewBox="0 0 10 8"><path d="M2 1h6M2 4h6L5 7z" stroke="#222" fill="#222" /></svg>
        <span class="bar b2"></span>
        <h1>M</h1>
        <div class="winbtns">
          <button aria-label="Minimize"><svg viewBox="0 0 14 14"><path d="M1 6.500h12" stroke="#777" /></svg></button>
          <button aria-label="Maximize"><svg viewBox="0 0 14 14"><path d="M1.500 1.500h11v11h-11z" fill="none" stroke="#777" /></svg></button>
          <button aria-label="Close"><svg viewBox="0 0 14 14"><path d="M1 1l12 12M13 1L1 13" stroke="#777" /></svg></button>
        </div>
      </header>
      <nav class="ex-tabs">
        <button class="file">File</button><button>Home</button><button class="on">Share</button><button class="view">View</button>
        <svg class="up" viewBox="0 0 14 14"><path d="M1 10l6-6 6 6" fill="none" stroke="#999" stroke-width="1.500" /></svg>
        <span class="help"></span>
      </nav>
      <div class="ex-ribbon">
        <div class="grp send">
          <div class="btns">
            <button class="big dim"><svg><use href="#i-share" /></svg>Share</button>
            <button class="big dim"><svg><use href="#i-email" /></svg>Email</button>
            <button class="big dim"><svg><use href="#i-zip" /></svg>Zip</button>
            <div class="mini">
              <svg class="i20"><use href="#i-disc" /></svg><svg class="i20"><use href="#i-printer" /></svg><svg class="i20"><use href="#i-fax" /></svg>
            </div>
          </div>
          <p>Send</p>
        </div>
        <div class="grp with">
          <div class="btns">
            <button class="big wide"><svg><use href="#i-people" /></svg><span>Give access<br>to <i class="tri"></i></span></button>
            <button class="big"><svg><use href="#i-lock" /></svg><span>Remove<br>access</span></button>
          </div>
          <p>Share with</p>
        </div>
        <div class="grp sec">
          <div class="btns"><button class="big wide"><svg><use href="#i-advsec" /></svg><span>Advanced<br>security</span></button></div>
        </div>
      </div>
      <div class="ex-addr">
        <svg class="arr" viewBox="0 0 16 16"><path d="M15 8H1M6 3L1 8l5 5" fill="none" stroke="#666" stroke-width="1.600" /></svg>
        <svg class="arr" viewBox="0 0 16 16"><path d="M1 8h14M10 3l5 5-5 5" fill="none" stroke="#d0d0d0" stroke-width="1.600" /></svg>
        <svg class="sm" viewBox="0 0 10 10"><path d="M1 3l4 4 4-4" fill="none" stroke="#777" stroke-width="1.800" /></svg>
        <svg class="arr" viewBox="0 0 16 16"><path d="M8 16V1M3 6l5-5 5 5" fill="none" stroke="#666" stroke-width="1.800" /></svg>
        <div class="crumbs">
          <svg class="i20"><use href="#i-wfolder" /></svg>
          <span class="lq">«</span><span>Local Disk (D:)</span>
          <svg class="sm" viewBox="0 0 10 10"><path d="M3 1l4 4-4 4" fill="none" stroke="#666" stroke-width="1.500" /></svg>
          <span>M</span>
          <svg class="dd" viewBox="0 0 12 12"><path d="M1 4l5 5 5-5" fill="none" stroke="#666" stroke-width="2" /></svg>
          <button class="refresh" aria-label="Refresh"><svg viewBox="0 0 16 16"><path d="M11 2a6.500 6.500 0 1 1-6 0M5 6V2H1" fill="none" stroke="#777" stroke-width="1.800" /></svg></button>
        </div>
        <input class="ex-search" aria-label="Search M" placeholder="Search M">
      </div>
      <div class="ex-body">
        <ul class="ex-nav">
          <li v-for="(n, i) in nav" :key="i" :class="['l' + n.level, { gap: n.gap, cur: n.selected }]">
            <svg class="i20"><use :href="'#i-' + n.icon" /></svg><span>{{ n.label }}</span>
          </li>
        </ul>
        <div class="ex-files">
          <svg class="sort" viewBox="0 0 10 6"><path d="M1 5l4-4 4 4" fill="none" stroke="#666" /></svg>
          <table>
            <thead><tr><th>Name</th><th class="sz">Size</th></tr></thead>
            <tbody>
              <tr v-for="f in files" :key="f.name">
                <td><span class="cell"><svg class="i20"><use :href="'#i-' + f.icon" /></svg>{{ f.name }}</span></td>
                <td class="num">{{ f.size }}</td>
              </tr>
            </tbody>
          </table>
          <div class="ex-scroll"><svg viewBox="0 0 10 12"><path d="M8 1L3 6l5 5" fill="none" stroke="#555" stroke-width="2" /></svg><i></i></div>
        </div>
      </div>
      <footer class="ex-status">
        <span>4 items</span>
        <button class="lv" aria-label="Details"><svg class="i20"><use href="#i-listview" /></svg></button>
        <svg class="i20"><use href="#i-picture" /></svg>
      </footer>
    </section>

    <!-- Main application -->
    <main class="pro">
      <div class="top">
        <div class="head">
          <div class="qa">
            <svg class="i20"><use href="#i-newproj" /></svg>
            <svg class="i20"><use href="#i-openproj" /></svg>
            <svg class="i20"><use href="#i-save" /></svg>
            <svg class="i18"><use href="#i-undo" /></svg><i class="tri"></i>
            <svg class="i18"><use href="#i-redo" /></svg><i class="tri"></i>
            <svg class="i20 gm"><use href="#i-gmap" /></svg>
            <span class="tile"><svg class="i20"><use href="#i-nav" /></svg></span>
            <svg class="i20"><use href="#i-select" /></svg>
            <svg class="more" viewBox="0 0 10 8"><path d="M2 1h6M2 4h6L5 7z" stroke="#444" fill="#444" /></svg>
            <span class="apptitle">Untitled - Map - ArcGIS Pro</span>
          </div>
          <nav class="tabs">
            <button class="proj">Project</button><button class="t1">Map</button><button class="t2">Insert</button>
            <button class="on">Analysis</button><button class="t3">View</button><button class="t4">Edit</button><button class="t5">Imagery</button>
          </nav>
        </div>
        <div class="ctx"><span>Raster Layer</span><button>Data</button></div>
        <div class="rest"></div>
      </div>
      <div class="ribbon">
        <div class="rg geo">
          <div class="rgb">
            <button class="big2 hist"><svg><use href="#i-history" /></svg>History</button>
            <div class="stack">
              <button><svg class="i20"><use href="#i-model" /></svg>ModelBuilder</button>
              <button><svg class="i20"><use href="#i-python" /></svg>Python <i class="tri"></i></button>
              <button><svg class="i20"><use href="#i-env" /></svg>Environments</button>
            </div>
            <button class="big2 rtu"><svg><use href="#i-cloudtools" /></svg><span>Ready To<br>Use Tools<i class="tri"></i></span></button>
            <button class="big2 tl"><svg><use href="#i-tools" /></svg>Tools</button>
          </div>
          <p>Geoprocessing <svg class="launch"><use href="#i-launch" /></svg></p>
        </div>
        <div class="rg gal">
          <div class="gallery">
            <button class="big2"><svg><use href="#i-buffer" /></svg>Buffer</button>
            <button class="big2"><svg><use href="#i-summ" /></svg><span>Summarize<br>Within</span></button>
          </div>
          <p>Tools</p>
        </div>
        <div class="rg rf"><button class="big2"><svg><use href="#i-tools" /></svg><span>Raster<br>Functions<i class="tri"></i></span></button></div>
        <div class="rg last">
          <button class="big2"><svg><use href="#i-suit" /></svg><span>Suitability<br>Modeler</span></button>
          <button class="big2"><svg><use href="#i-vis" /></svg><span>Visibility<br>Analysis</span></button>
        </div>
      </div>
      <div class="dock">
        <section class="pane catalog">
          <header><h2>Catalog</h2><i class="tri"></i><svg class="i18"><use href="#i-pin" /></svg><svg class="i18 x"><use href="#i-x" /></svg></header>
          <nav class="ptabs"><a href="#" class="on">Project</a><a href="#">Portal</a><a href="#">Favorites</a>
            <button class="burger" aria-label="Options"><i></i><i></i><i></i></button></nav>
          <div class="srow">
            <svg class="back" viewBox="0 0 22 22"><circle cx="11" cy="11" r="10" fill="none" stroke="#bbb" stroke-width="1.500" /><path d="M17 11H6M10 6l-5 5 5 5" fill="none" stroke="#aaa" stroke-width="2" /></svg>
            <button class="home" aria-label="Home"><svg class="i16"><use href="#i-home" /></svg></button>
            <div class="sbox"><input placeholder="Search" aria-label="Search project"><svg class="i16"><use href="#i-mag" /></svg><i class="tri pale"></i></div>
          </div>
          <div class="treewrap">
            <ul class="tree">
              <li v-for="(t, i) in tree" :key="i" :class="['v' + t.level]">
                <svg v-if="t.state !== 'none'" class="tw" viewBox="0 0 14 12">
                  <path v-if="t.state === 'open'" d="M8 2v8H0z" fill="#555" />
                  <path v-else d="M3 1l5 5-5 5z" fill="none" stroke="#888" />
                </svg>
                <span :class="['lab', { cur: t.selected }]"><svg class="i20"><use :href="'#i-' + t.icon" /></svg>{{ t.label }}</span>
              </li>
            </ul>
            <div class="vs"><i class="ar up"></i><span><b></b></span><i class="ar dn"></i></div>
          </div>
          <div class="hs"><i class="ar lf"></i><span><b></b></span><i class="ar rt"></i></div>
        </section>

        <section class="pane contents">
          <header><h2>Contents</h2></header>
          <div class="crow"><svg class="i20 flt"><use href="#i-filter" /></svg><input placeholder="Search" aria-label="Search contents"></div>
          <div class="itabs"><button v-for="(c, i) in contentTabs" :key="c" :class="{ on: i === 1 }" :aria-label="c"><svg><use :href="'#i-' + c" /></svg></button></div>
          <h3>Data Source</h3>
          <div class="row r0"><svg class="tw" viewBox="0 0 14 12"><path d="M8 2v8H0z" fill="#555" /></svg><svg class="i20"><use href="#i-map" /></svg>Map</div>
          <div v-for="g in groups" :key="g.layer" class="lgroup">
            <div class="row r1"><svg class="tw" viewBox="0 0 14 12"><path d="M8 2v8H0z" fill="#555" /></svg><svg class="i20"><use :href="g.bare ? '#i-folder' : '#i-gfolder'" /></svg>{{ g.folder }}</div>
            <div class="row r2"><svg class="tw" viewBox="0 0 14 12"><path d="M8 2v8H0z" fill="#555" /></svg>
              <label :class="{ cur: g.selected }"><input type="checkbox" :checked="g.checked">{{ g.layer }}</label></div>
            <div class="rgbh">RGB</div>
            <div v-for="b in bands" :key="b.key" class="band"><i :class="b.key"></i><span>{{ b.name }}</span><em :class="b.key">{{ b.band }}</em></div>
          </div>
        </section>

        <section class="mapview">
          <div class="mtab"><span>Map<svg class="i16"><use href="#i-x" /></svg></span></div>
          <div class="blank"></div>
          <canvas ref="aerial" width="620" height="562"></canvas>
          <div class="mstatus">
            <span class="pick scale"><select aria-label="Map scale"><option>1:13,570</option></select></span>
            <span class="vb"></span>
            <span class="tile2"><svg class="i20"><use href="#i-snapmap" /></svg></span>
            <svg class="i20"><use href="#i-snap2" /></svg><svg class="i20"><use href="#i-grid" /></svg>
          </div>
        </section>
      </div>
    </main>

    <!-- Export Raster pane -->
    <form class="export" @submit.prevent>
      <header><h2>Export Raster</h2><b>?</b><i class="tri"></i><svg class="mx" viewBox="0 0 12 12"><path d="M1 1h10v10H1z" fill="none" stroke="#666" stroke-width="1.500" /><path d="M0 0h12v4H0z" fill="#666" /></svg></header>
      <h4>Extract Bands_MOLG_2018_ITM_36_14.ecw</h4>
      <nav class="ptabs"><a href="#" class="on">General</a><a href="#">Settings</a></nav>
      <div class="field first"><label for="out">Output Raster Dataset</label><div class="ctl"><input id="out" value="D:\M\v2.tif"><svg class="i20"><use href="#i-addras" /></svg></div></div>
      <div class="field"><label for="cs">Coordinate System</label><div class="ctl"><span class="pick"><select id="cs"><option>Israel_TM_Grid</option></select></span><svg class="i20"><use href="#i-globe" /></svg></div></div>
      <div class="field"><label for="gt">Geographic Transformations</label><div class="ctl"><span class="pick"><select id="gt"><option>None</option></select></span></div></div>
      <div class="field tight"><label for="cg">Clipping Geometry <svg class="inf"><use href="#i-info" /></svg></label><div class="ctl"><span class="pick"><select id="cg"><option>Default</option></select></span><svg class="i20"><use href="#i-openf" /></svg></div></div>
      <label class="chk main"><input type="checkbox">Maintain Clipping Extent <svg class="inf"><use href="#i-info" /></svg></label>
      <h5>Cell Size</h5>
      <div class="pair"><label for="cx">X</label><input id="cx" value="0.1"><label for="cy">Y</label><input id="cy" value="0.1"></div>
      <h5 class="rs">Raster Size</h5>
      <div class="pair"><label for="co">Columns</label><input id="co" value="20003"><label for="ro">Rows</label><input id="ro" value="20003"></div>
      <div class="field px"><label for="pt">Pixel Type</label><div class="ctl"><span class="pick"><select id="pt"><option>8 Bit Unsigned</option></select></span></div></div>
      <div class="field"><label for="nd" class="near">NoData value</label><div class="ctl spin"><input id="nd"><span><i class="ar up"></i><i class="ar dn"></i></span></div></div>
      <h6><svg viewBox="0 0 10 10"><path d="M1 3l4 4 4-4" fill="none" stroke="#555" stroke-width="2.500" /></svg>Renderer Settings</h6>
      <label class="chk dis"><input type="checkbox" disabled>Force RGB <svg class="inf"><use href="#i-info" /></svg></label>
      <label class="chk dis"><input type="checkbox" disabled>Use Colormap <svg class="inf"><use href="#i-info" /></svg></label>
      <label class="chk"><input type="checkbox">Use Renderer <svg class="inf"><use href="#i-info" /></svg></label>
      <div class="field px"><label for="of">Output Format</label><div class="ctl"><span class="pick"><select id="of"><option>TIFF</option></select></span></div></div>
      <p class="ct">Compression Type</p>
      <hr>
      <button class="go">Export</button>
    </form>

    <!-- Layer context menu -->
    <ul class="menu">
      <template v-for="m in menu" :key="m.label">
        <li :class="{ off: m.disabled, act: m.active }">
          <svg class="i20"><use v-if="m.icon" :href="'#i-' + m.icon" /></svg><button :disabled="m.disabled">{{ m.label }}</button><i v-if="m.arrow" class="ar rt"></i>
        </li>
        <li v-if="m.sep" class="sep"></li>
      </template>
    </ul>
    <ul class="menu sub">
      <li><svg class="i20"><use href="#i-mosaic" /></svg><button>Add to Mosaic Dataset</button></li>
      <li class="act"><svg class="i20"><use href="#i-exportr" /></svg><button>Export Raster</button></li>
    </ul>

    <svg class="marker" aria-hidden="true"><path v-for="(d, i) in strokePaths" :key="i" :d="d" /></svg>
  </div>
</template>

<style>
body { margin: 0; background: #fff; }
</style>

<style scoped>
.desk { position: relative; min-height: 100vh; overflow: hidden; background: #fff; font: 14px/20px "Open Sans", "Noto Sans", sans-serif; color: #4a4a4a; }
.desk * { box-sizing: border-box; }
.defs { position: absolute; width: 0; height: 0; }
ul { list-style: none; margin: 0; padding: 0; }
h1, h2, h3, h4, h5, h6, p { margin: 0; font-weight: 400; font-size: 14px; }
button, input, select { font: inherit; color: inherit; margin: 0; padding: 0; border: 0; background: none; border-radius: 0; outline: 0; min-width: 0; }
a { color: inherit; text-decoration: none; }
svg { flex: none; display: block; }
.i20 { width: 20px; height: 20px; }
.i18 { width: 18px; height: 18px; }
.i16 { width: 16px; height: 16px; }
.tri { display: inline-block; flex: none; border: 4px solid transparent; border-top: 5px solid #555; border-bottom: 0; }
.ar { flex: none; width: 10px; height: 8px; background: #909090; }
.ar.up { clip-path: polygon(50% 0, 100% 100%, 0 100%); }
.ar.dn { clip-path: polygon(0 0, 100% 0, 50% 100%); }
.ar.lf { width: 8px; height: 10px; clip-path: polygon(0 50%, 100% 0, 100% 100%); }
.ar.rt { width: 8px; height: 10px; clip-path: polygon(0 0, 100% 50%, 0 100%); }

/* ---- explorer ---- */
.explorer { position: absolute; left: 0; top: 5px; bottom: 36px; width: 470px; background: #fff; display: flex; flex-direction: column; border-top: 1px solid #aaa; border-bottom: 1px solid #999; box-shadow: 0 3px 14px rgba(0,0,0,.4); color: #222; }
.ex-title { height: 37px; display: flex; align-items: center; padding-left: 7px; }
.bar { width: 1px; height: 16px; background: #888; }
.b1 { margin: 0 13px 0 7px; }
.f2 { margin-left: 4px; }
.qat { width: 10px; height: 8px; margin-left: 7px; }
.b2 { margin: 0 7px 0 12px; }
h1 { font-size: 16px; color: #999; }
.winbtns { display: flex; margin-left: auto; margin-right: 2px; }
.winbtns button { width: 58px; height: 36px; display: grid; place-items: center; }
.winbtns svg { width: 14px; height: 14px; }
.ex-tabs { height: 29px; display: flex; align-items: stretch; border-bottom: 1px solid #dcdfe2; font-size: 13px; }
.ex-tabs button { width: 70px; }
.ex-tabs .file { background: #0063b1; color: #fff; }
.ex-tabs .on { width: 67px; background: #f4f6f8; border: 1px solid #dcdfe2; border-bottom: 0; margin-bottom: -1px; }
.ex-tabs .view { width: 63px; }
.ex-tabs .up { width: 14px; margin-left: auto; }
.help { width: 18px; height: 18px; border-radius: 50%; background: #1979ca; margin: 6px 6px 0 8px; }
.ex-ribbon { height: 113px; display: flex; background: #f4f6f8; border-bottom: 1px solid #dcdfe2; font-size: 13px; line-height: 17px; }
.grp { display: flex; flex-direction: column; justify-content: space-between; border-right: 1px solid #dcdfe2; margin: 3px 0 2px; text-align: center; }
.grp p { font-size: 13px; line-height: 17px; color: #555; }
.btns { display: flex; padding-top: 5px; }
.send { width: 191px; }
.send .btns { padding-left: 6px; }
.with { width: 136px; }
.with .btns { padding-left: 5px; }
.sec { width: 74px; }
.big { width: 50px; display: flex; flex-direction: column; align-items: center; gap: 4px; white-space: nowrap; }
.big svg { width: 38px; height: 38px; }
.wide { width: 72px; }
.dim { color: #777; }
.mini { display: flex; flex-direction: column; gap: 6px; margin-left: 4px; }
.big .tri { margin: 0 0 4px 2px; }
.ex-addr { height: 43px; display: flex; align-items: center; padding-left: 16px; }
.arr { width: 16px; height: 16px; }
.ex-addr > .arr + .arr { margin-left: 22px; }
.ex-addr .sm { width: 10px; height: 10px; }
.ex-addr > .sm { margin: 0 13px 0 17px; }
.crumbs { width: 286px; height: 28px; margin-left: 8px; border: 1px solid #d5d5d5; display: flex; align-items: center; gap: 10px; font-size: 14px; margin-left: 13px; }
.crumbs .i20 { margin: 0 -4px 0 0; }
.dd { width: 12px; height: 12px; margin-left: auto; margin-right: -6px; }
.refresh { width: 21px; height: 28px; border-left: 1px solid #d5d5d5; display: grid; place-items: center; }
.refresh svg { width: 16px; height: 16px; }
.ex-search { width: 38px; height: 28px; border: 1px solid #d5d5d5; border-right: 0; margin-left: 12px; padding-left: 10px; }
.ex-body { flex: 1; min-height: 0; display: flex; }
.ex-nav { width: 211px; border-right: 1px solid #eee; padding-top: 22px; }
.ex-nav li { height: 30px; display: flex; align-items: center; gap: 5px; padding-left: 30px; margin-right: 2px; }
.ex-nav li.l1 { padding-left: 40px; }
.ex-nav li.gap { margin-top: 10px; }
.ex-nav li.cur { background: #d9d9d9; }
.ex-files { flex: 1; display: flex; flex-direction: column; min-width: 0; padding-left: 2px; }
.sort { width: 10px; height: 6px; margin: 2px 0 0 75px; }
table { width: 237px; border-collapse: collapse; }
th { text-align: left; font-weight: 400; color: #52657c; height: 33px; padding: 0 0 13px 21px; line-height: 18px; }
th.sz { padding-left: 8px; border-left: 1px solid #e5e5e5; }
td { height: 27px; padding: 0; }
.cell { display: flex; gap: 5px; align-items: center; padding-left: 23px; }
tbody tr:first-child td { height: 28px; }
td:first-child { width: 144px; }
.num { text-align: right; color: #6d6d6d; }
.ex-scroll { height: 20px; margin-top: auto; background: #f0f0f0; display: flex; align-items: center; }
.ex-scroll svg { width: 21px; height: 12px; }
.ex-scroll i { width: 90px; height: 20px; background: #cbcbcb; }
.ex-status { height: 28px; display: flex; align-items: center; padding-left: 17px; color: #1f3d5c; }
.lv { width: 28px; height: 28px; margin: 0 3px 0 auto; border: 1px solid #5ab0dc; background: #cce8f7; display: grid; place-items: center; }
.ex-status > svg { margin-right: 11px; }

/* ---- main window ---- */
.pro { position: absolute; left: 448px; right: 0; top: 0; bottom: 37px; background: #f0f0f0; border: 1px solid #1a7fc4; border-right: 0; border-top-color: #6fa5cc; box-shadow: 0 3px 16px rgba(0,40,60,.5); display: flex; flex-direction: column; }
.top { display: flex; height: 74px; }
.head { width: 691px; display: flex; flex-direction: column; }
.qa { height: 42px; display: flex; align-items: center; padding-left: 15px; }
.qa .i20 { margin-right: 15px; }
.qa .i18 + .tri { margin: 0 10px 0 7px; }
.qa .i18 { margin-left: -4px; }
.qa .tri + .i18 { margin-left: 1px; }
.qa .gm { margin: 0 8px 0 -3px; }
.tile { width: 35px; height: 38px; background: #b8d3e8; display: grid; place-items: center; margin-right: 7px; }
.qa .tile .i20 { margin: 0; }
.qa .more { width: 10px; height: 8px; margin-left: 5px; }
.apptitle { font-size: 15px; color: #666; margin-left: 91px; white-space: nowrap; line-height: 32px; align-self: flex-start; margin-top: 3px; }
.tabs { height: 32px; display: flex; font-size: 15px; color: #666; border-bottom: 1px solid #c4c4c4; }
.tabs button { white-space: nowrap; overflow: hidden; }
.proj { width: 98px; background: #0078d0; color: #fff; margin-bottom: -1px; }
.tabs .proj { color: #fff; }
.t1 { width: 76px; }
.t2 { width: 72px; margin-right: 7px; }
.tabs .on { width: 88px; border: 1px solid #c4c4c4; border-bottom: 0; background: #f7f7f7; color: #0076c8; margin-bottom: -1px; }
.t3 { width: 80px; }
.t4 { width: 58px; }
.t5 { width: 84px; margin-left: 8px; }
.ctx { width: 155px; background: #ede1df; border-top: 5px solid #d0836b; border-bottom: 1px solid #c4c4c4; display: flex; flex-direction: column; align-items: flex-end; font-size: 15px; color: #666; }
.ctx span { height: 38px; line-height: 30px; padding-right: 54px; }
.ctx button { height: 30px; padding-right: 17px; }
.rest { flex: 1; border-bottom: 1px solid #c4c4c4; }
.ribbon { height: 114px; display: flex; background: #f7f7f7; border-bottom: 1px solid #c4c4c4; color: #4a4a4a; }
.rg { border-right: 1px solid #d0d0d0; margin: 5px 0 4px; display: flex; flex-direction: column; justify-content: space-between; }
.rg p { text-align: center; font-size: 13px; line-height: 14px; }
.geo { width: 319px; }
.geo p { padding-left: 4px; }
.launch { width: 12px; height: 12px; float: right; margin: 1px 4px 0 0; }
.rgb { display: flex; }
.big2 { display: flex; flex-direction: column; align-items: center; line-height: 18px; gap: 4px; white-space: nowrap; }
.big2 svg { width: 40px; height: 40px; }
.big2 .tri { margin: 0 0 3px 2px; }
.hist { width: 62px; margin-left: 1px; }
.hist, .rtu, .tl, .rf .big2, .last .big2 { padding-top: 2px; }
.stack { display: flex; flex-direction: column; width: 122px; }
.stack button { height: 28px; display: flex; align-items: center; gap: 5px; }
.stack .tri { margin-left: 1px; }
.rtu { width: 78px; }
.tl { width: 52px; }
.gal { width: 413px; border-right: 0; padding-left: 5px; }
.gallery { height: 83px; border: 1px solid #9c9c9c; border-right: 0; background: #fbfbfb; display: flex; padding-top: 4px; font-size: 13px; color: #222; }
.gallery .big2 { width: 101px; line-height: 16px; gap: 0; }
.gallery .big2 + .big2 { width: 100px; }
.gal p { padding-right: 80px; }
.rf { width: 81px; align-items: center; padding-right: 6px; }
.last { flex: 1; flex-direction: row; justify-content: flex-start; padding-left: 2px; }
.last .big2 { width: 80px; margin-right: -11px; }
.dock { flex: 1; min-height: 0; display: flex; padding: 8px 0 8px 8px; gap: 8px; }
.pane { background: #f7f7f7; border: 1px solid #cfcfcf; border-top: 6px solid #c8c8c8; display: flex; flex-direction: column; min-height: 0; }
.pane header { display: flex; align-items: center; height: 30px; padding: 0 4px 0 6px; }
h2 { font-size: 19px; color: #6e6e6e; margin-right: auto; }
.catalog { width: 246px; flex: none; }
.pane header .tri { border-width: 6px 5px 0; margin-right: 5px; }
.pane header .i18 { margin-right: 3px; margin-bottom: 4px; }
.pane header .x { margin-right: 0; margin-bottom: 2px; }
.ptabs { display: flex; height: 30px; margin: 9px 0 0 7px; gap: 13px; align-items: stretch; }
.ptabs a { line-height: 28px; border-bottom: 2px solid transparent; }
.ptabs a.on { border-bottom-color: #0076c8; font-weight: 600; }
.burger { display: flex; flex-direction: column; gap: 2px; margin: 7px 11px 0 auto; width: 18px; }
.burger i { height: 4px; border-radius: 2px; background: #4c4c4c; }
.srow { height: 30px; margin: 11px 7px 0 6px; display: flex; align-items: center; }
.back { width: 22px; height: 22px; margin-right: 6px; }
.home { width: 25px; height: 30px; flex: none; border: 1px solid #c9c9c9; border-right: 0; display: grid; place-items: center; }
.sbox { flex: 1; min-width: 0; height: 30px; border: 1px solid #8c8c8c; background: #fff; display: flex; align-items: center; gap: 11px; padding: 0 8px 0 6px; }
.sbox input { flex: 1; width: 0; font-style: italic; }
input::placeholder { color: #555; opacity: 1; }
.pale { border-top-color: #bbb; border-width: 4px 3px 0; }
.treewrap { flex: 1; min-height: 0; display: flex; margin-top: 4px; overflow: hidden; }
.tree { width: 222px; overflow: hidden; }
.tree li { height: 30px; display: flex; align-items: center; white-space: nowrap; }
.tw { width: 14px; height: 12px; }
.v0 { padding-left: 9px; }
.v1 { padding-left: 15px; }
.v2 { padding-left: 35px; }
.v3 { padding-left: 55px; }
.lab { flex: 1; height: 30px; display: flex; align-items: center; gap: 10px; padding-left: 5px; border: 1px solid transparent; border-width: 1px 0; }
.lab.cur { background: #c9c9c9; border: 1px solid #8c8c8c; border-right: 0; padding-left: 4px; }
.vs { width: 10px; margin: 5px 0 0 4px; display: flex; flex-direction: column; gap: 4px; }
.vs span { flex: 1; background: #dedede; padding-top: 117px; }
.vs b { display: block; height: 308px; background: #747474; }
.hs { display: flex; gap: 4px; height: 18px; align-items: center; padding: 0 22px 0 8px; }
.hs span { flex: 1; height: 10px; background: #dedede; padding-left: 16px; }
.hs b { display: block; width: 91px; height: 10px; background: #747474; }

.contents { width: 476px; flex: none; border-top-color: #0078d0; overflow: hidden; }
.contents h2 { color: #0076c8; }
.crow { display: flex; align-items: center; margin: 12px 0 0 3px; }
.crow input { flex: 1; height: 30px; border: 1px solid #8c8c8c; background: #fff; padding-left: 6px; font-style: italic; margin-left: 8px; }
.itabs { height: 45px; margin: 7px 0 0 19px; display: flex; border-bottom: 2px solid #cdcdcd; }
.itabs button { width: 40px; display: grid; place-items: center; border-bottom: 3px solid transparent; margin-bottom: -2px; }
.itabs .on { border-bottom-color: #0078d0; }
.itabs svg { width: 26px; height: 26px; }
h3 { font-size: 16px; font-weight: 600; margin: 18px 0 0 20px; line-height: 20px; color: #444; }
.row { height: 31px; display: flex; align-items: center; white-space: nowrap; gap: 6px; }
.row .tw { margin-right: -6px; }
.r0 { padding-left: 2px; margin-top: 8px; }
.r1 { padding-left: 16px; gap: 5px; font-weight: 600; }
.r1 .tw { margin-right: -5px; }
.r2 { padding-left: 30px; }
.r2 label { flex: 1; height: 30px; display: flex; align-items: center; gap: 5px; padding-left: 1px; border: 1px solid transparent; }
.r2 label.cur { background: #c5dbec; border-color: #1a7fc4; }
input[type=checkbox] { appearance: none; width: 18px; height: 18px; border: 2px solid #828282; background: #fff; display: grid; place-items: center; flex: none; }
input[type=checkbox]:checked::after { content: ""; width: 12px; height: 12px; background: #555; clip-path: polygon(0 55%, 12% 42%, 38% 68%, 85% 0, 100% 8%, 42% 100%); }
.rgbh { height: 27px; line-height: 25px; padding-left: 49px; }
.lgroup { padding-bottom: 4px; }
.lgroup .rgbh { font-weight: 600; }
.band { height: 24px; display: flex; align-items: center; padding-left: 52px; }
.band i { width: 21px; height: 16px; margin-right: 9px; }
.band i.red { background: #f00; }
.band i.green { background: #0f0; }
.band i.blue { background: #00f; }
.band span { width: 41px; }
.band em { font-style: normal; }
.band em.green { padding-left: 6px; }

.mapview { flex: 1; min-width: 0; display: flex; flex-direction: column; border: 1px solid #cfcfcf; border-width: 0 0 1px 1px; }
.mtab { height: 28px; border-bottom: 3px solid #c8c8c8; display: flex; }
.mtab span { width: 93px; background: #c8c8c8; display: flex; align-items: center; justify-content: flex-end; gap: 8px; padding-right: 6px; font-size: 14px; color: #666; }
.blank { flex: 1; background: #fff; border-bottom: 1px solid #111; }
canvas { width: 100%; height: 562px; object-fit: none; object-position: left top; display: block; }
.mstatus { height: 29px; display: flex; align-items: center; gap: 7px; padding-left: 7px; background: #f7f7f7; }
.pick { position: relative; display: block; }
.ctl .pick { flex: 1; }
.pick select { appearance: none; width: 100%; height: 28px; border: 1px solid #a0a0a0; background: #fff; padding-left: 5px; }
.pick::after { content: ""; position: absolute; right: 6px; top: 12px; border: 3px solid transparent; border-top: 4px solid #555; border-bottom: 0; }
.scale { width: 124px; }
.vb { width: 1px; height: 18px; background: #bbb; margin: 0 -2px 0 -2px; }
.tile2 { width: 26px; height: 26px; background: #9fd3f2; display: grid; place-items: center; }
.mstatus .i20 + .i20 { margin-left: 3px; }

/* ---- export pane ---- */
.export { position: absolute; left: 1412px; right: 0; top: 1px; background: #f7f7f7; border-left: 1px solid #8f8f8f; border-bottom: 1px solid #8f8f8f; border-top: 5px solid #c8c8c8; box-shadow: 0 2px 14px rgba(0,0,0,.4); padding: 0 10px 14px 14px; display: flex; flex-direction: column; }
.export header { height: 30px; display: flex; align-items: center; gap: 10px; margin-left: -6px; margin-right: -4px; }
.export h2 { font-size: 18px; }
.export header b { font-weight: 600; color: #666; }
.export header .tri { border-width: 6px 5px 0; }
.mx { width: 11px; height: 11px; }
h4 { font-size: 18px; line-height: 30px; margin: 14px -10px 0 22px; white-space: nowrap; }
.export .ptabs { height: 28px; margin: 10px 0 0 1px; }
.export .ptabs a { line-height: 26px; }
.field { margin-top: 6px; }
.field > label { display: flex; height: 20px; margin-bottom: 7px; align-items: center; }
.first { margin-top: 27px; }
.first > label { margin-bottom: 9px; }
.tight { margin-top: 3px; }
.px { margin-top: 16px; }
.ctl { display: flex; gap: 9px; height: 28px; align-items: center; }
.ctl > input { flex: 1; height: 28px; border: 1px solid #a0a0a0; background: #fff; padding-left: 5px; }
.inf { width: 16px; height: 16px; margin: -5px 0 0 11px; }
.chk { display: flex; align-items: center; height: 25px; padding-left: 19px; }
.chk input { margin-right: 5px; border-width: 1px; }
.chk .inf { margin: -8px 0 0 14px; }
.chk.main { height: 20px; margin-top: 6px; padding-left: 0; }
.dis { color: #999; }
.dis input[type=checkbox] { background: #eff2f4; border-color: #bbb; }
h5 { line-height: 20px; font-size: 15px; margin: 4px 0 14px; color: #6e6e6e; }
h5.rs { margin-top: 19px; }
.pair { display: grid; grid-template-columns: 100px 74px 75px 74px; column-gap: 0; padding-left: 19px; align-items: center; color: #222; }
.pair label + input + label { padding-left: 30px; }
.pair input { height: 30px; border: 1px solid #a0a0a0; background: #fff; padding-left: 4px; width: 100%; color: #4a4a4a; }
.pair input:last-child { margin-left: 30px; }
.field > label.near { margin-bottom: 6px; }
.spin { border: 1px solid #a0a0a0; background: #fff; padding-right: 6px; }
.spin > input { border: 0; height: 26px; }
.spin span { display: flex; flex-direction: column; gap: 5px; }
.spin .ar { background: #111; height: 5px; width: 9px; }
h6 { display: flex; align-items: center; gap: 5px; font-size: 15px; font-weight: 600; line-height: 20px; margin: 7px 0 11px 1px; }
h6 svg { width: 10px; height: 10px; }
.ct { line-height: 20px; margin-top: 3px; }
hr { width: 100%; border: 0; border-top: 1px solid #cfcfcf; margin: 10px 0 18px; }
.go { align-self: flex-end; width: 78px; height: 30px; border: 1px solid #333; background: #fff; margin-right: -10px; border-right: 0; padding-left: 8px; }

/* ---- menus ---- */
.menu { position: absolute; left: 963px; top: 0; width: 272px; background: #fff; border: 1px solid #9a9a9a; border-top: 0; padding: 2px 1px 0; box-shadow: 3px 4px 8px rgba(0,0,0,.35); color: #333; border-radius: 0 0 3px 3px; }
.menu li { height: 30px; display: flex; align-items: center; padding: 0 12px 0 4px; gap: 14px; }
.menu li .ar { margin-left: auto; width: 5px; height: 8px; background: #777; }
.menu li.act { background: #c5dbec; }
.menu li.act .ar { background: #333; }
.menu li.off { color: #aaa; }
.menu li.sep { height: 6px; padding: 0; border-top: 1px solid #999; margin-top: 1px; }
.menu.sub { left: 1233px; top: 551px; width: 240px; border-top: 1px solid #9a9a9a; padding: 2px 1px 1px; border-radius: 0; }

.marker { position: absolute; left: 0; top: 0; width: 100%; height: 100%; pointer-events: none; }
.marker path { fill: none; stroke: #f98718; stroke-width: 4px; stroke-linecap: round; stroke-linejoin: round; opacity: .92; }
</style>
